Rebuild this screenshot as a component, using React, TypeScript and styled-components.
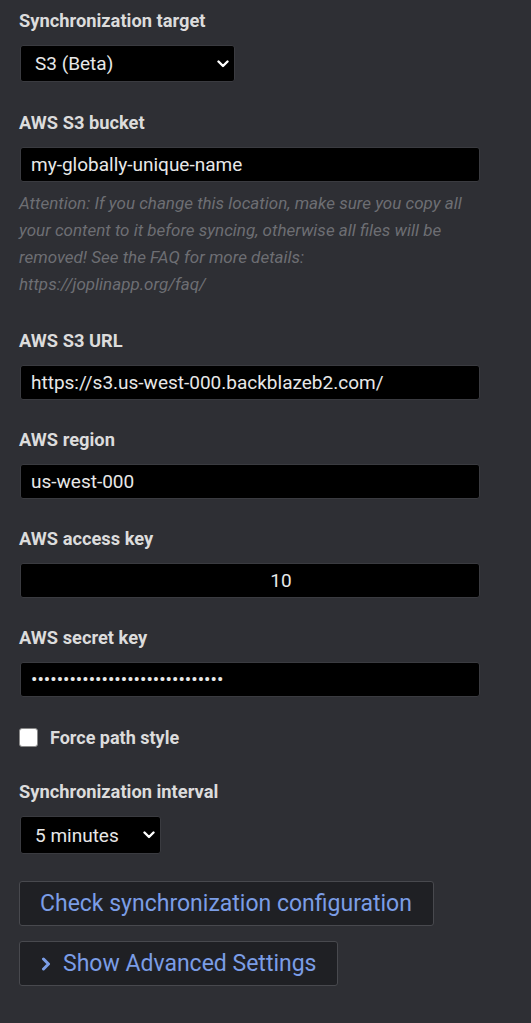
import React from "react";
import styled, { createGlobalStyle } from "styled-components";

const GlobalStyle = createGlobalStyle`
  html, body {
    margin: 0;
    padding: 0;
    background: #2e2f34;
  }
  body {
    font-family: Roboto, "Liberation Sans", sans-serif;
    color: #dddddd;
  }
  * { box-sizing: border-box; }
`;

const Page = styled.div`
  min-height: 1023px;
  width: 531px;
  background: #2e2f34;
  padding: 11px 51px 30px 19px;
  display: flex;
  flex-direction: column;
`;

const Section = styled.div<{ $gap?: number }>`
  display: flex;
  flex-direction: column;
  margin-bottom: ${(p) => (p.$gap ?? 30)}px;
`;

const Label = styled.label`
  font-size: 18.3px;
  font-weight: 700;
  line-height: 20px;
  color: #dcdcdc;
  margin-bottom: 14px;
`;

const TextInput = styled.input<{ $center?: boolean }>`
  width: 460px;
  height: 35px;
  margin-left: 1px;
  background: #000000;
  border: 1px solid #3a3b40;
  border-radius: 3px;
  color: #e8e8e8;
  font-family: Roboto, "Liberation Sans", sans-serif;
  font-size: 19px;
  padding: ${(p) => (p.$center ? "0 10px 0 72px" : "0 10px")};
  text-align: ${(p) => (p.$center ? "center" : "left")};
  outline: none;
`;

const SelectWrap = styled.div<{ $w: number; $h: number }>`
  position: relative;
  width: ${(p) => p.$w}px;
  height: ${(p) => p.$h}px;
  margin-left: 1px;
`;

const Select = styled.select`
  appearance: none;
  -webkit-appearance: none;
  width: 100%;
  height: 100%;
  background: #000000;
  border: 1px solid #3a3b40;
  border-radius: 3px;
  color: #e8e8e8;
  font-family: Roboto, "Liberation Sans", sans-serif;
  font-size: 19px;
  padding: 0 30px 0 14px;
  outline: none;
`;

const Chevron = styled.svg`
  position: absolute;
  right: 6px;
  top: 50%;
  transform: translateY(-50%);
  width: 12px;
  height: 8px;
  pointer-events: none;
`;

const Help = styled.div`
  margin-top: 8px;
  font-size: 17px;
  font-style: italic;
  line-height: 27px;
  color: #6d6e73;
  width: 460px;
`;

const CheckRow = styled.label`
  display: flex;
  align-items: center;
  gap: 12px;
  height: 20px;
  margin-bottom: 35px;
  font-size: 18px;
  font-weight: 700;
  color: #dcdcdc;
`;

const Box = styled.span`
  width: 19px;
  height: 19px;
  background: #ffffff;
  border: 1px solid #8a8a8a;
  border-radius: 3px;
  display: inline-block;
`;

const Buttons = styled.div`
  display: flex;
  flex-direction: column;
  align-items: flex-start;
  gap: 15px;
`;

const Button = styled.button`
  height: 45px;
  background: #1f2024;
  border: 1px solid #48494e;
  border-radius: 3px;
  color: #7b9de6;
  font-family: Roboto, "Liberation Sans", sans-serif;
  font-size: 23px;
  padding: 0 21px 0 20px;
  display: flex;
  align-items: center;
  gap: 12px;
  cursor: pointer;
`;

const Arrow = styled.svg`
  width: 10px;
  height: 14px;
  margin-left: 1px;
`;

const ChevronIcon = () => (
  <Chevron viewBox="0 0 12 8">
    <path d="M1.5 1.5 L6 6 L10.5 1.5" fill="none" stroke="#ffffff" strokeWidth="2.4" strokeLinecap="round" strokeLinejoin="round" />
  </Chevron>
);

const Field = ({ label, value, center, type }: { label: string; value: string; center?: boolean; type?: string }) => (
  <Section>
    <Label>{label}</Label>
    <TextInput type={type ?? "text"} defaultValue={value} $center={center} />
  </Section>
);

export default function App() {
  return (
    <>
      <GlobalStyle />
      <Page>
        <Section $gap={31}>
          <Label>Synchronization target</Label>
          <SelectWrap $w={215} $h={37}>
            <Select defaultValue="s3">
              <option value="s3">S3 (Beta)</option>
            </Select>
            <ChevronIcon />
          </SelectWrap>
        </Section>

        <Section $gap={33}>
          <Label>AWS S3 bucket</Label>
          <TextInput defaultValue="my-globally-unique-name" />
          <Help>
            Attention: If you change this location, make sure you copy all your content to it before syncing,
            otherwise all files will be removed! See the FAQ for more details: https://joplinapp.org/faq/
          </Help>
        </Section>

        <Field label="AWS S3 URL" value="https://s3.us-west-000.backblazeb2.com/" />
        <Field label="AWS region" value="us-west-000" />
        <Field label="AWS access key" value="10" center />
        <Field label="AWS secret key" value="••••••••••••••••••••••••••••••" type="password" />

        <CheckRow>
          <Box />
          Force path style
        </CheckRow>

        <Section $gap={27}>
          <Label>Synchronization interval</Label>
          <SelectWrap $w={141} $h={38}>
            <Select defaultValue="5">
              <option value="5">5 minutes</option>
            </Select>
            <ChevronIcon />
          </SelectWrap>
        </Section>

        <Buttons>
          <Button>Check synchronization configuration</Button>
          <Button>
            <Arrow viewBox="0 0 10 14">
              <path d="M2.5 2 L7.5 7 L2.5 12" fill="none" stroke="#7b9de6" strokeWidth="3" strokeLinecap="round" strokeLinejoin="round" />
            </Arrow>
            Show Advanced Settings
          </Button>
        </Buttons>
      </Page>
    </>
  );
}
